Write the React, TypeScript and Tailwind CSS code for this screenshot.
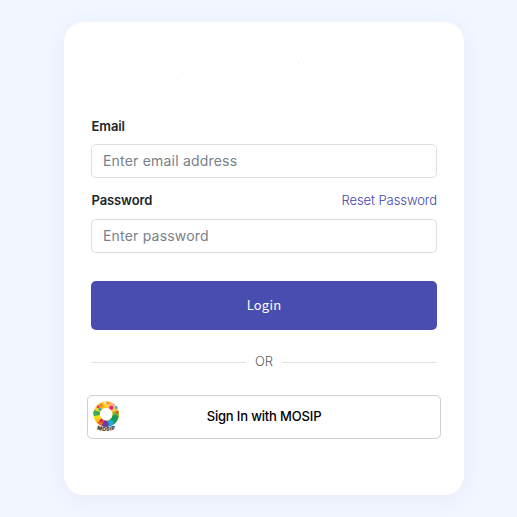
import React from "react";

function MosipLogo() {
  return (
    <svg className="block h-[32px] w-[28px]" viewBox="0 0 28 32" aria-label="MOSIP">
      <g fill="none" strokeWidth="6.2">
        <circle cx="14.2" cy="13.2" r="9.5" stroke="#f9c313" />
        <g transform="translate(.2 -.5)">
          <path d="M14 4.1A9.6 9.6 0 0 1 20 6.2" stroke="#fbb365" />
          <path d="M20 6.2A9.6 9.6 0 0 1 23.2 11" stroke="#f3c94c" />
          <path d="M23.2 11A9.6 9.6 0 0 1 23.4 15.5" stroke="#7fbb31" />
          <path d="M23.4 15.5A9.6 9.6 0 0 1 19.5 21.6" stroke="#159c50" />
          <path d="M19.5 21.6A9.6 9.6 0 0 1 15.5 23.2" stroke="#25a7dc" />
          <path d="M15.5 23.2A9.6 9.6 0 0 1 10.5 22.6" stroke="#6b399b" />
          <path d="M10.5 22.6A9.6 9.6 0 0 1 6.6 19.8" stroke="#ef6a24" />
          <path d="M6.6 19.8A9.6 9.6 0 0 1 4.5 15" stroke="#f5e012" />
          <path d="M4.5 15A9.6 9.6 0 0 1 5 10.5" stroke="#36a852" />
          <path d="M5 10.5A9.6 9.6 0 0 1 8 6.2" stroke="#f4da20" />
        </g>
      </g>
      <circle cx="6.2" cy="5.8" r="1.5" fill="#e9327e" />
      <circle cx="9.2" cy="4.5" r="1.9" fill="#f58a24" />
      <circle cx="8" cy="8.2" r="1.5" fill="#27a7bd" />
      <circle cx="12.6" cy="2.2" r="1.3" fill="#fff09a" />
      <circle cx="16" cy="1.9" r="1.2" fill="#ff8d2e" />
      <circle cx="14.5" cy="5" r="1.7" fill="#f7e21c" />
      <circle cx="19.3" cy="6.8" r="2" fill="#e91e82" />
      <circle cx="21.6" cy="3.8" r="1.3" fill="#f5a5c0" />
      <circle cx="24.2" cy="6.5" r="1.5" fill="#38b5cf" />
      <circle cx="25" cy="11.2" r="1.6" fill="#ed5a2f" />
      <circle cx="23.2" cy="16.3" r="2.7" fill="#159c50" />
      <circle cx="19.6" cy="21.4" r="2.2" fill="#1ea9dc" />
      <circle cx="14.2" cy="23" r="2.5" fill="#6b399b" />
      <circle cx="9.4" cy="19.6" r="1.9" fill="#e32a51" />
      <circle cx="5.6" cy="18.8" r="2" fill="#f6c81c" />
      <circle cx="3.2" cy="11.4" r="2" fill="#3caf58" />
      <path id="logo-arc" d="M4.2 27.8Q14 32.2 24.4 27.6" fill="none" />
      <text
        fill="#3d3d40"
        stroke="#3d3d40"
        strokeWidth="0.2"
        fontFamily="Inter, sans-serif"
        fontWeight="800"
        fontSize="5.2"
        textLength="19"
      >
        <textPath href="#logo-arc" startOffset="0.6">MOSIP</textPath>
      </text>
    </svg>
  );
}

const inputClass =
  "block h-[34px] w-full rounded-[5px] border border-[#dee0e2] bg-white px-[11px] pb-[2px] text-[14px] tracking-[0.2px] text-[#212529] outline-none placeholder:text-[#788188]";

export default function App() {
  return (
    <main className="flex h-[517px] w-[517px] justify-center overflow-hidden bg-[#f2f6ff] pt-[22px] pl-[11px] font-['Inter',sans-serif]">
      <section className="h-[473px] w-[400px] rounded-[20px] bg-white px-[23px] shadow-[0_4px_24px_rgba(60,65,100,0.06)]">
        <div className="flex h-[94px] justify-between pr-[142px] pl-[90px]" aria-hidden="true">
          <span className="mt-[56px] h-[3px] w-px bg-[#f5f5ee]" />
          <span className="mt-[41px] size-px bg-[#e4e4e6]" />
        </div>
        <form className="px-[4px]" onSubmit={(e) => e.preventDefault()}>
          <label htmlFor="email" className="block h-[28px] pl-[0.5px] text-[13px] leading-[20px] font-semibold tracking-[-0.08px] text-[#212529]">
            Email
          </label>
          <input id="email" type="email" placeholder="Enter email address" className={inputClass} />
          <div className="mt-[12px] flex h-[29px] justify-between text-[13px] leading-[20px]">
            <label htmlFor="password" className="pl-[0.5px] font-semibold tracking-[-0.1px] text-[#212529]">Password</label>
            <a href="#reset" className="font-light tracking-[-0.07px] text-[#4244aa]">Reset Password</a>
          </div>
          <input id="password" type="password" placeholder="Enter password" className={inputClass} />
          <button className="mt-[28px] block h-[49px] w-full rounded-[5px] bg-[#4a4db0] pb-[2px] font-['Noto_Sans_CJK_JP','Noto_Sans',sans-serif] text-[13px] font-normal tracking-[0.2px] text-white">
            Login
          </button>
          <div className="mt-[22px] flex h-[20px] items-center gap-[9px] text-[13px] leading-[20px] text-[#626262]">
            <span className="h-px flex-1 bg-[#e2e2e2]" />
            <span className="pb-[2px] font-light">OR</span>
            <span className="h-px flex-1 bg-[#e2e2e2]" />
          </div>
        </form>
        <button className="mt-[23px] grid h-[44px] w-full grid-cols-[28px_1fr_28px] items-center rounded-[5px] border border-[#d1d1d1] bg-white px-[4px] text-[13px] font-medium tracking-[-0.17px] text-black">
          <MosipLogo />
          <span>Sign In with MOSIP</span>
        </button>
      </section>
    </main>
  );
}
